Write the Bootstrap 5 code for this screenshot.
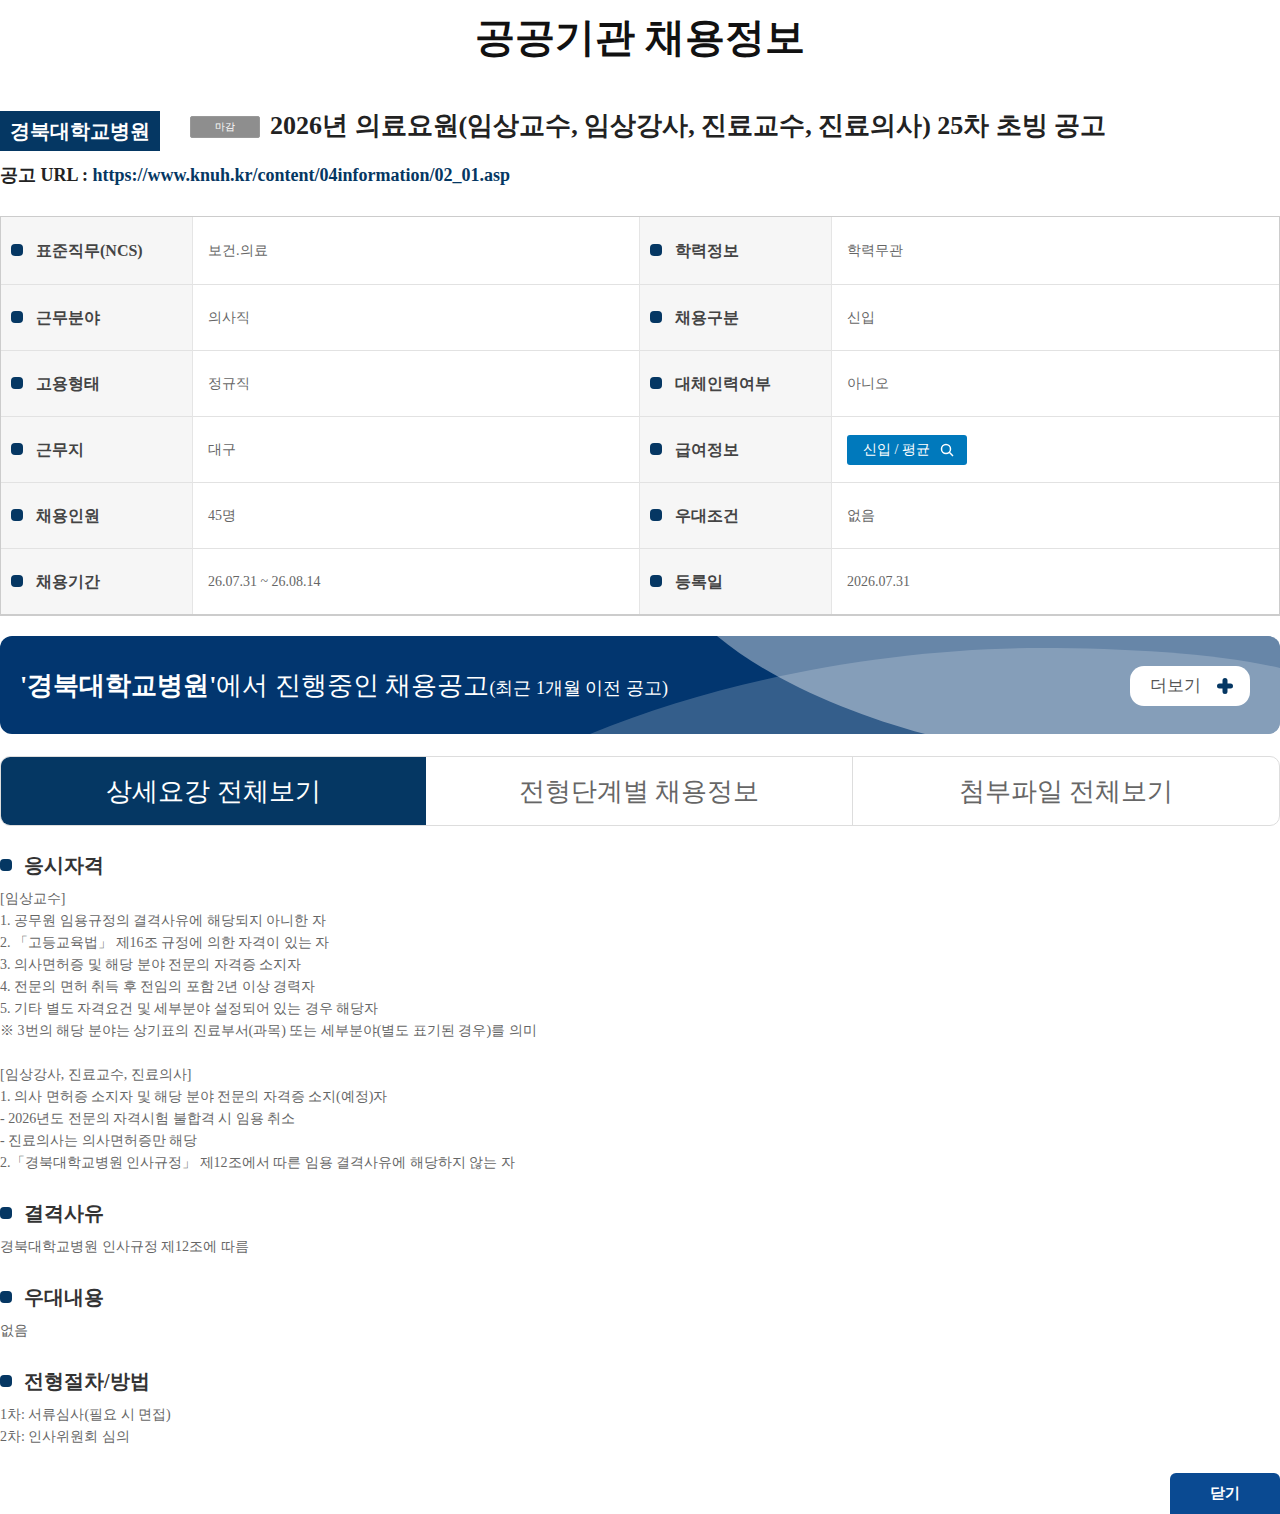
<!DOCTYPE html>
<html lang="ko">
<head>
<meta charset="utf-8">
<title>공공기관 채용정보</title>
<link rel="stylesheet" href="https://cdn.jsdelivr.net/npm/bootstrap@5.3.0/dist/css/bootstrap.min.css">
<style>
html,body{margin:0;padding:0}
body{font-family:"Liberation Serif",serif;color:#666;font-size:14px;line-height:22px;background:#fff;height:1514px;overflow:hidden}
.page-title{font-size:40px;font-weight:700;color:#111;text-align:center;margin:0;height:76px;line-height:76px}
.head-row{margin-top:35px;height:40px}
.org-tag{width:160px;height:40px;background:#053763;color:#fff;font-size:20px;font-weight:700;line-height:40px;text-align:center}
.closed-tag{width:70px;height:22px;margin:5px 10px 0 30px;background:#8e8e8e;color:#fff;font-size:10px;line-height:20px;text-align:center;border:1px solid #999;border-radius:2px}
.post-title{font-size:26px;font-weight:700;color:#222;line-height:30px;margin:0}
.url-row{margin-top:12px;font-size:18px;font-weight:700;color:#222;line-height:24px}
.url-row a{color:#053763;text-decoration:none}
.info-grid{margin-top:29px;border:1px solid #ccc;border-width:1px 1px 2px 1px;display:grid;grid-template-columns:192px 447px 192px 1fr;grid-template-rows:68px 66px 66px 66px 66px 65px}
.info-grid>div{display:flex;align-items:center;border-bottom:1px solid #e2e2e2}
.info-grid>.lab{background:#f6f6f6;border-right:1px solid #e5e5e5;font-size:16px;font-weight:700;color:#444;padding-left:10px}
.info-grid>.val{padding-left:15px;border-right:1px solid #e5e5e5}
.info-grid>.val.last{border-right:0}
.info-grid>.endrow{border-bottom:0}
.dot{display:inline-block;width:12px;height:12px;border-radius:4px;background:#053763;flex:none;margin-right:13px;position:relative;top:-1px}
.pay-btn{width:120px;height:30px;background:#0079bc;border-radius:3px;color:#fff;font-size:14px;text-decoration:none;padding:0 13px 0 16px}
.banner-box{margin-top:20px;height:98px;border-radius:12px;background:#02366f;position:relative;overflow:hidden;color:#fff}
.banner-art{position:absolute;inset:0;width:100%;height:100%}
.banner-text{position:absolute;left:20px;top:30px;font-size:26px;line-height:40px;white-space:nowrap}
.banner-text small{font-size:18px}
.more-pill{position:absolute;right:30px;top:30px;width:120px;height:40px;border-radius:14px;background:#fff;color:#555;font-size:17px;text-decoration:none;padding:0 17px 0 20px}
.tab-wrap{margin-top:22px;height:70px;border:1px solid #ddd;border-radius:10px;overflow:hidden;display:grid;grid-template-columns:425px 427px 1fr}
.tab-wrap a{display:flex;align-items:center;justify-content:center;font-size:26px;color:#666;text-decoration:none;border-right:1px solid #ddd;padding-top:2px}
.tab-wrap a:last-child{border-right:0}
.tab-wrap a.on{background:#053763;color:#fff;border-right:0}
.sec-title{font-size:20px;font-weight:700;color:#333;line-height:28px;margin:25px 0 0;display:flex;align-items:center}
.sec-title .dot{margin-right:12px;top:0}
.sec-body{margin-top:9px}
.close-row{margin-top:25px;height:41px}
.close-btn{width:110px;height:41px;background:#0a4a92;color:#fff;font-size:15px;font-weight:700;border-radius:6px 6px 0 0;line-height:41px;text-align:center;text-decoration:none}
</style>
</head>
<body>
<h1 class="page-title">공공기관 채용정보</h1>
<div class="d-flex align-items-start head-row">
  <div class="org-tag">경북대학교병원</div>
  <div class="closed-tag">마감</div>
  <h2 class="post-title">2026년 의료요원(임상교수, 임상강사, 진료교수, 진료의사) 25차 초빙 공고</h2>
</div>
<div class="url-row">공고 URL : <a href="#">https://www.knuh.kr/content/04information/02_01.asp</a></div>

<div class="info-grid">
  <div class="lab"><span class="dot"></span>표준직무(NCS)</div><div class="val">보건.의료</div>
  <div class="lab"><span class="dot"></span>학력정보</div><div class="val last">학력무관</div>
  <div class="lab"><span class="dot"></span>근무분야</div><div class="val">의사직</div>
  <div class="lab"><span class="dot"></span>채용구분</div><div class="val last">신입</div>
  <div class="lab"><span class="dot"></span>고용형태</div><div class="val">정규직</div>
  <div class="lab"><span class="dot"></span>대체인력여부</div><div class="val last">아니오</div>
  <div class="lab"><span class="dot"></span>근무지</div><div class="val">대구</div>
  <div class="lab"><span class="dot"></span>급여정보</div><div class="val last"><a href="#" class="pay-btn d-flex align-items-center justify-content-between"><span>신입 / 평균</span><svg width="14" height="14" viewBox="0 0 14 14" fill="none" stroke="#fff" stroke-width="1.5"><circle cx="6" cy="6" r="4.5"/><path d="M9.3 9.3 13 13"/></svg></a></div>
  <div class="lab"><span class="dot"></span>채용인원</div><div class="val">45명</div>
  <div class="lab"><span class="dot"></span>우대조건</div><div class="val last">없음</div>
  <div class="lab endrow"><span class="dot"></span>채용기간</div><div class="val endrow">26.07.31 ~ 26.08.14</div>
  <div class="lab endrow"><span class="dot"></span>등록일</div><div class="val last endrow">2026.07.31</div>
</div>

<div class="banner-box">
  <svg class="banner-art" viewBox="0 0 1280 98" preserveAspectRatio="none" aria-hidden="true">
    <path d="M717 0C770 44 850 78 925 98H1280V0Z" fill="#fff" fill-opacity=".4"/>
    <path d="M590 98C730 40 900 12 1040 12C1130 12 1220 18 1280 32V98Z" fill="#fff" fill-opacity=".2"/>
  </svg>
  <div class="banner-text"><strong>'경북대학교병원'</strong>에서 진행중인 채용공고<small>(최근 1개월 이전 공고)</small></div>
  <a href="#" class="more-pill d-flex align-items-center justify-content-between"><span>더보기</span><svg width="16" height="16" viewBox="0 0 16 16" fill="#053763"><path d="M5.500 2.500a2.500 2.500 0 0 1 5 0v3h3a2.500 2.500 0 0 1 0 5h-3v3a2.500 2.500 0 0 1-5 0v-3h-3a2.500 2.500 0 0 1 0-5h3Z"/></svg></a>
</div>

<div class="tab-wrap">
  <a href="#" class="on">상세요강 전체보기</a>
  <a href="#">전형단계별 채용정보</a>
  <a href="#">첨부파일 전체보기</a>
</div>

<h3 class="sec-title"><span class="dot"></span>응시자격</h3>
<div class="sec-body">[임상교수]<br>
1. 공무원 임용규정의 결격사유에 해당되지 아니한 자<br>
2. 「고등교육법」 제16조 규정에 의한 자격이 있는 자<br>
3. 의사면허증 및 해당 분야 전문의 자격증 소지자<br>
4. 전문의 면허 취득 후 전임의 포함 2년 이상 경력자<br>
5. 기타 별도 자격요건 및 세부분야 설정되어 있는 경우 해당자<br>
※ 3번의 해당 분야는 상기표의 진료부서(과목) 또는 세부분야(별도 표기된 경우)를 의미<br>
<br>
[임상강사, 진료교수, 진료의사]<br>
1. 의사 면허증 소지자 및 해당 분야 전문의 자격증 소지(예정)자<br>
- 2026년도 전문의 자격시험 불합격 시 임용 취소<br>
- 진료의사는 의사면허증만 해당<br>
2.「경북대학교병원 인사규정」 제12조에서 따른 임용 결격사유에 해당하지 않는 자</div>

<h3 class="sec-title"><span class="dot"></span>결격사유</h3>
<div class="sec-body">경북대학교병원 인사규정 제12조에 따름</div>

<h3 class="sec-title"><span class="dot"></span>우대내용</h3>
<div class="sec-body">없음</div>

<h3 class="sec-title"><span class="dot"></span>전형절차/방법</h3>
<div class="sec-body">1차: 서류심사(필요 시 면접)<br>2차: 인사위원회 심의</div>

<div class="d-flex justify-content-end close-row"><a href="#" class="close-btn">닫기</a></div>
</body>
</html>
